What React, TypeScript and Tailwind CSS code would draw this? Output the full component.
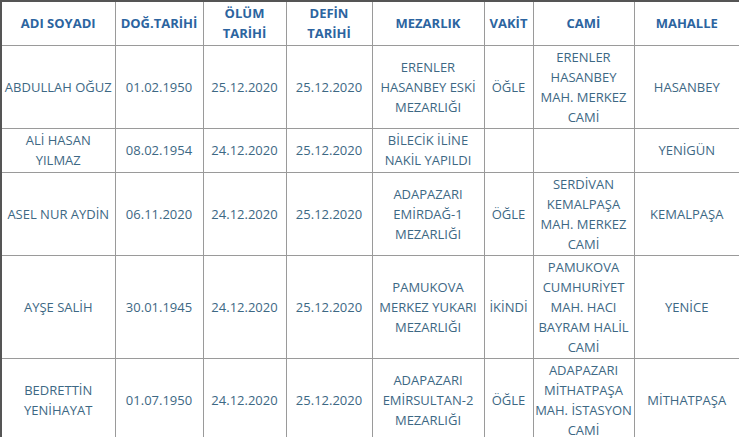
const headers = [
  "ADI SOYADI",
  "DOĞ.TARİHİ",
  "ÖLÜM TARİHİ",
  "DEFİN TARİHİ",
  "MEZARLIK",
  "VAKİT",
  "CAMİ",
  "MAHALLE",
];

const widths = [
  "w-[114px]",
  "w-[88px]",
  "w-[83px]",
  "w-[86px]",
  "w-[112px]",
  "w-[49px]",
  "w-[101px]",
  "w-[106px]",
];

// the CAMİ column is tight, it needs no side padding to keep "MAH. İSTASYON" on one line
const pads = ["px-0.5", "px-0.5", "px-0.5", "px-0.5", "px-0.5", "px-0.5", "px-0", "px-0.5"];

const rows = [
  ["ABDULLAH OĞUZ", "01.02.1950", "25.12.2020", "25.12.2020", "ERENLER HASANBEY ESKİ MEZARLIĞI", "ÖĞLE", "ERENLER HASANBEY MAH. MERKEZ CAMİ", "HASANBEY"],
  ["ALİ HASAN YILMAZ", "08.02.1954", "24.12.2020", "25.12.2020", "BİLECİK İLİNE NAKİL YAPILDI", "", "", "YENİGÜN"],
  ["ASEL NUR AYDİN", "06.11.2020", "24.12.2020", "25.12.2020", "ADAPAZARI EMİRDAĞ-1 MEZARLIĞI", "ÖĞLE", "SERDİVAN KEMALPAŞA MAH. MERKEZ CAMİ", "KEMALPAŞA"],
  ["AYŞE SALİH", "30.01.1945", "24.12.2020", "25.12.2020", "PAMUKOVA MERKEZ YUKARI MEZARLIĞI", "İKİNDİ", "PAMUKOVA CUMHURİYET MAH. HACI BAYRAM HALİL CAMİ", "YENİCE"],
  ["BEDRETTİN YENİHAYAT", "01.07.1950", "24.12.2020", "25.12.2020", "ADAPAZARI EMİRSULTAN-2 MEZARLIĞI", "ÖĞLE", "ADAPAZARI MİTHATPAŞA MAH. İSTASYON CAMİ", "MİTHATPAŞA"],
];

export default function App() {
  return (
    <div className="w-[739px] h-[437px] overflow-hidden bg-white font-['Open_Sans',sans-serif]">
      <table className="w-[739px] table-fixed border-collapse border-2 border-[#555]">
        <colgroup>
          {widths.map((w, i) => (
            <col key={i} className={w} />
          ))}
        </colgroup>
        <thead>
          <tr className="h-[44px]">
            {headers.map((h) => (
              <th
                key={h}
                className="border border-[#9a9a9a] px-1 py-px text-center align-middle text-[13px] font-bold leading-5 text-[#2c64a0]"
              >
                {h}
              </th>
            ))}
          </tr>
        </thead>
        <tbody>
          {rows.map((r, ri) => (
            <tr key={ri} className="h-[44px]">
              {r.map((c, ci) => (
                <td
                  key={ci}
                  className={`${pads[ci]} border border-[#9a9a9a] py-px text-center align-middle text-[13px] leading-5 text-[#3d6884]`}
                >
                  {c}
                </td>
              ))}
            </tr>
          ))}
        </tbody>
      </table>
    </div>
  );
}
